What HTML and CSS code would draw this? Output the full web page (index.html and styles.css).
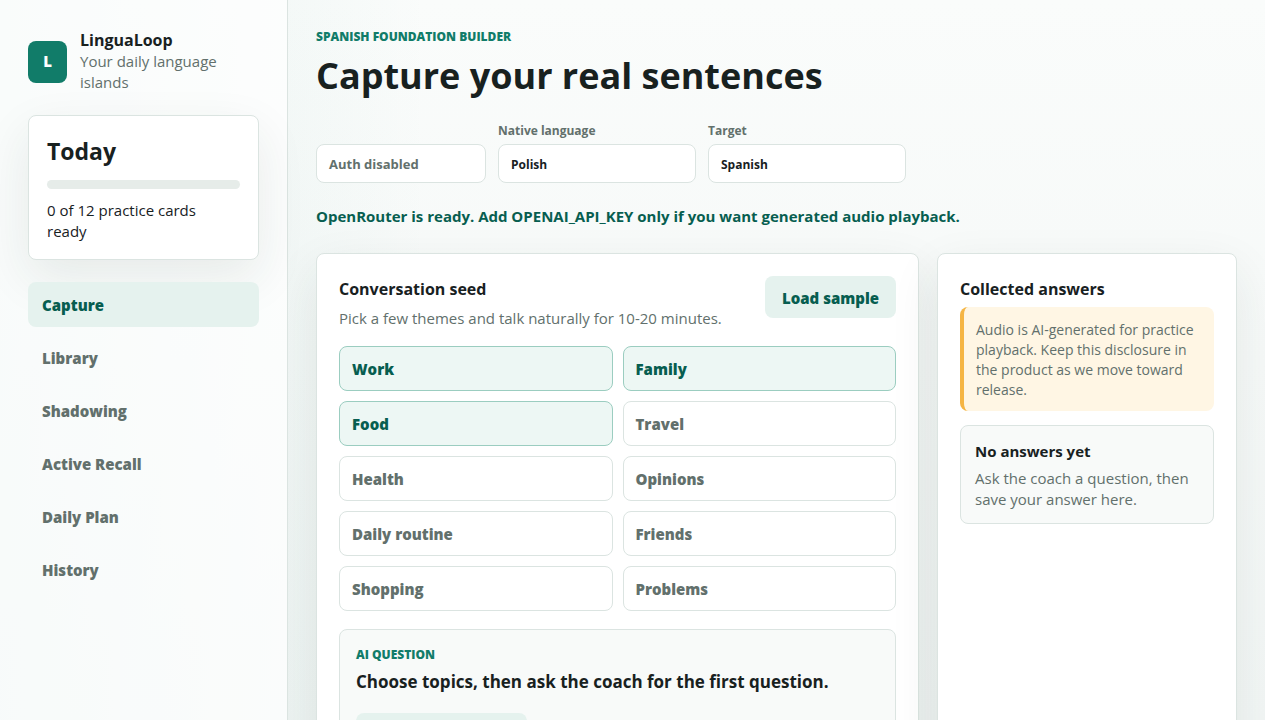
FILE: index.html
```html
<!DOCTYPE html>
<html lang="en">
<head>
  <meta charset="UTF-8">
  <meta name="viewport" content="width=device-width, initial-scale=1.0">
  <title>LinguaLoop</title>
  <link rel="stylesheet" href="styles.css">
</head>
<body>
  <div class="app-shell">
    <aside class="sidebar">
      <div class="brand">
        <div class="brand-mark">L</div>
        <div>
          <strong>LinguaLoop</strong>
          <span>Your daily language islands</span>
        </div>
      </div>

      <section class="today">
        <h2>Today</h2>
        <div class="meter"></div>
        <p>0 of 12 practice cards ready</p>
      </section>

      <nav class="nav">
        <button class="active" type="button">Capture</button>
        <button type="button">Library</button>
        <button type="button">Shadowing</button>
        <button type="button">Active Recall</button>
        <button type="button">Daily Plan</button>
        <button type="button">History</button>
      </nav>
    </aside>

    <main class="main">
      <header class="topbar">
        <p class="eyebrow">Spanish foundation builder</p>
        <h1>Capture your real sentences</h1>
        <div class="settings">
          <div class="auth-box">Auth disabled</div>
          <div class="field">
            <label for="nativeLanguage">Native language</label>
            <input type="text" id="nativeLanguage" value="Polish">
          </div>
          <div class="field">
            <label for="targetLanguage">Target</label>
            <input type="text" id="targetLanguage" value="Spanish">
          </div>
        </div>
      </header>

      <p class="status">OpenRouter is ready. Add OPENAI_API_KEY only if you want generated audio playback.</p>

      <div class="columns">
        <section class="panel">
          <div class="panel-head">
            <div>
              <h2>Conversation seed</h2>
              <p>Pick a few themes and talk naturally for 10-20 minutes.</p>
            </div>
            <button class="secondary" type="button">Load sample</button>
          </div>

          <div class="topics">
            <button class="selected" type="button">Work</button>
            <button class="selected" type="button">Family</button>
            <button class="selected" type="button">Food</button>
            <button type="button">Travel</button>
            <button type="button">Health</button>
            <button type="button">Opinions</button>
            <button type="button">Daily routine</button>
            <button type="button">Friends</button>
            <button type="button">Shopping</button>
            <button type="button">Problems</button>
          </div>

          <div class="question">
            <p class="eyebrow">AI question</p>
            <h3>Choose topics, then ask the coach for the first question.</h3>
            <button class="secondary" type="button">Ask first question</button>
          </div>
        </section>

        <aside class="panel">
          <h2>Collected answers</h2>
          <p class="disclosure">Audio is AI-generated for practice playback. Keep this disclosure in the product as we move toward release.</p>
          <div class="empty">
            <strong>No answers yet</strong>
            <p>Ask the coach a question, then save your answer here.</p>
          </div>
        </aside>
      </div>
    </main>
  </div>
</body>
</html>
```

FILE: styles.css
```css
:root {
  --ink: #18211f;
  --muted: #62706c;
  --line: #dbe4e1;
  --green: #117c69;
  --green-dark: #075e50;
  --mint: #e5f2ee;
  --shadow: 0 18px 50px rgba(28, 54, 47, 0.09);
}

* {
  box-sizing: border-box;
}

body {
  margin: 0;
  font-family: "Segoe UI", "Open Sans", "Noto Sans", sans-serif;
  font-size: 15px;
  line-height: 21px;
  color: var(--ink);
  background:
    linear-gradient(90deg, rgba(17, 124, 105, 0.08), transparent 34%),
    linear-gradient(180deg, #fafcfb, #f2f6f5);
}

h1, h2, h3, p {
  margin: 0;
}

button, input {
  font: inherit;
}

button {
  border: 0;
  border-radius: 8px;
  font-weight: 800;
  cursor: pointer;
}

.app-shell {
  display: grid;
  grid-template-columns: 288px minmax(0, 1fr);
  height: 100vh;
}

.sidebar {
  padding: 28px;
  border-right: 1px solid var(--line);
  background: rgba(255, 255, 255, 0.75);
}

.brand {
  display: flex;
  align-items: center;
  gap: 13px;
  padding-top: 2px;
  margin-bottom: 22px;
}

.brand-mark {
  display: grid;
  place-items: center;
  flex: 0 0 39px;
  height: 42px;
  border-radius: 8px;
  background: var(--green);
  color: #fff;
  font-weight: 800;
}

.brand strong, .brand span {
  display: block;
}

.brand strong {
  font-size: 16px;
}

.brand span {
  color: var(--muted);
}

.today {
  padding: 18px 18px 17px;
  margin-bottom: 22px;
  border: 1px solid var(--line);
  border-radius: 8px;
  background: #fff;
  box-shadow: var(--shadow);
}

.today h2 {
  font-size: 23px;
  line-height: 34px;
}

.today p {
  padding-right: 18px;
}

.meter {
  height: 9px;
  margin: 12px 0 11px;
  border-radius: 9px;
  background: #e6ece9;
}

.nav {
  display: grid;
  gap: 8px;
}

.nav button {
  padding: 13px 14px 11px;
  background: transparent;
  color: var(--muted);
  text-align: left;
}

.nav .active {
  background: var(--mint);
  color: var(--green-dark);
}

.main {
  padding: 28px;
  overflow-y: auto;
  scrollbar-width: none;
}

.eyebrow {
  font-size: 12px;
  line-height: 17px;
  font-weight: 800;
  text-transform: uppercase;
  color: var(--green);
}

h1 {
  margin: 8px 0 23px;
  font-size: 36px;
  line-height: 46px;
}

.settings {
  display: flex;
  align-items: flex-end;
  gap: 12px;
}

.auth-box, .field input {
  height: 39px;
  padding: 1px 12px 0;
  border: 1px solid var(--line);
  border-radius: 8px;
  background: #fff;
  font-size: 12px;
  font-weight: 700;
}

.auth-box {
  width: 170px;
  font-size: 13px;
  line-height: 37px;
  color: var(--muted);
}

.field label {
  display: block;
  margin-bottom: 4px;
  font-size: 12px;
  line-height: 18px;
  font-weight: 700;
  color: var(--muted);
}

.field input {
  display: block;
  width: 198px;
  color: var(--ink);
}

.status {
  margin: 23px 0 26px;
  font-weight: 700;
  color: var(--green-dark);
}

.columns {
  display: grid;
  grid-template-columns: minmax(0, 1fr) 300px;
  gap: 18px;
}

.panel {
  padding: 22px;
  border: 1px solid var(--line);
  border-radius: 8px;
  background: #fff;
  box-shadow: var(--shadow);
}

.panel h2 {
  font-size: 16px;
  line-height: 26px;
}

.panel p {
  color: var(--muted);
}

.panel .eyebrow {
  color: var(--green);
}

.panel-head {
  display: flex;
  justify-content: space-between;
  align-items: flex-start;
  margin-bottom: 17px;
}

.panel-head p {
  margin-top: 6px;
}

.secondary {
  height: 42px;
  padding: 2px 17px 0;
  background: var(--mint);
  color: var(--green-dark);
}

.topics {
  display: grid;
  grid-template-columns: 1fr 1fr;
  gap: 10px;
  margin-bottom: 18px;
}

.topics button {
  padding: 12px 12px 10px;
  border: 1px solid var(--line);
  background: #fff;
  color: var(--muted);
  text-align: left;
}

.topics .selected {
  border-color: #9bcdc0;
  background: #edf7f4;
  color: var(--green-dark);
}

.question {
  padding: 16px;
  border: 1px solid var(--line);
  border-radius: 8px;
  background: #f8faf9;
}

.question h3 {
  margin: 7px 0 19px;
  font-size: 17px;
  line-height: 24px;
}

.panel .disclosure {
  padding: 13px 12px 11px;
  margin: 5px 0 14px;
  border-left: 4px solid #f5b544;
  border-radius: 8px;
  background: #fff6e4;
  font-size: 14px;
  line-height: 20px;
}

.empty {
  padding: 15px 14px 13px;
  border: 1px solid var(--line);
  border-radius: 8px;
  background: #f8faf9;
}

.empty p {
  margin-top: 6px;
}
```
